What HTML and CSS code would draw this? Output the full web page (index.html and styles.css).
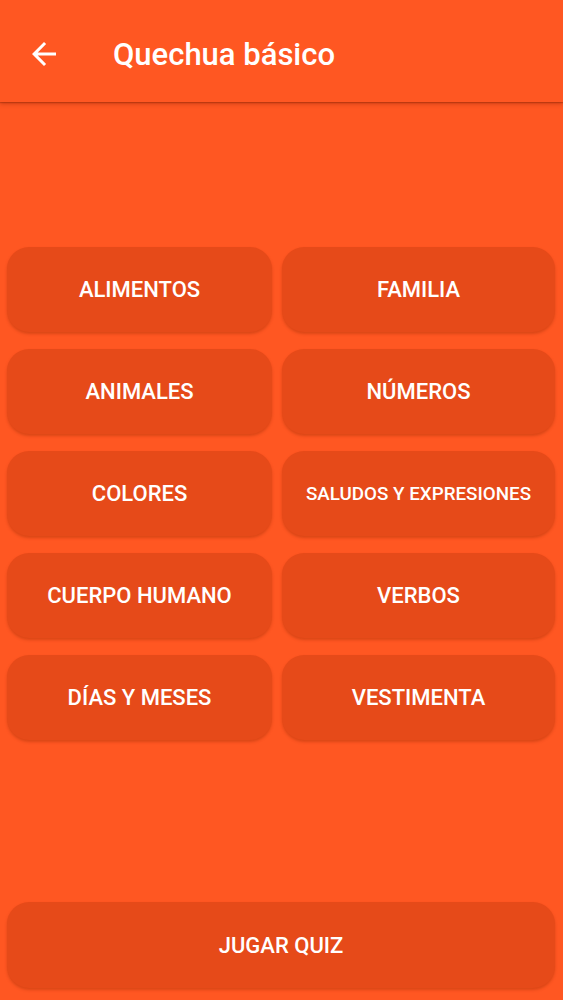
FILE: index.html
```html
<!DOCTYPE html>
<html lang="es">
<head>
<meta charset="utf-8">
<title>Quechua básico</title>
<link rel="stylesheet" href="styles.css">
</head>
<body>
<div class="screen">
  <header class="appbar">
    <button class="back" aria-label="Atrás">
      <svg viewBox="0 0 24 24" width="36" height="36"><path fill="#fff" d="M20 11H7.83l5.59-5.59L12 4l-8 8 8 8 1.41-1.41L7.83 13H20v-2z"/></svg>
    </button>
    <h1 class="title">Quechua básico</h1>
  </header>
  <main class="content">
    <div class="grid">
      <button class="btn">ALIMENTOS</button>
      <button class="btn">FAMILIA</button>
      <button class="btn">ANIMALES</button>
      <button class="btn">NÚMEROS</button>
      <button class="btn">COLORES</button>
      <button class="btn btn-small">SALUDOS Y EXPRESIONES</button>
      <button class="btn">CUERPO HUMANO</button>
      <button class="btn">VERBOS</button>
      <button class="btn">DÍAS Y MESES</button>
      <button class="btn">VESTIMENTA</button>
    </div>
    <button class="btn quiz">JUGAR QUIZ</button>
  </main>
</div>
</body>
</html>
```

FILE: styles.css
```css
html, body {
  margin: 0;
  padding: 0;
  background: #ff5722;
}
.screen {
  width: 563px;
  height: 1000px;
  display: flex;
  flex-direction: column;
  font-family: Roboto, "Noto Sans", sans-serif;
  background: #ff5722;
  overflow: hidden;
}
.appbar {
  box-sizing: border-box;
  height: 102px;
  padding-top: 6px;
  flex: none;
  display: flex;
  align-items: center;
  background: #ff5722;
  box-shadow: 0 2px 4px rgba(120, 30, 0, 0.35), 0 1px 1px rgba(120, 30, 0, 0.3);
  position: relative;
  z-index: 1;
}
.back {
  background: none;
  border: 0;
  padding: 0;
  margin: 0 0 0 26px;
  width: 36px;
  height: 36px;
  display: flex;
}
.title {
  margin: 0 0 0 51px;
  color: #fff;
  font-size: 31px;
  font-weight: 500;
  letter-spacing: 0;
}
.content {
  flex: 1;
  display: flex;
  flex-direction: column;
  padding: 0 8px 12px 7px;
}
.grid {
  margin-top: 145px;
  display: grid;
  grid-template-columns: 265fr 273fr;
  column-gap: 10px;
  row-gap: 17px;
}
.btn {
  height: 85px;
  border: 0;
  border-radius: 22px;
  background: #e64a19;
  color: #fff;
  font-family: Roboto, "Noto Sans", sans-serif;
  font-weight: 500;
  font-size: 22px;
  padding: 0;
  box-shadow: 0 2px 3px rgba(150, 40, 0, 0.35);
}
.btn-small {
  font-size: 18.8px;
}
.quiz {
  margin-top: auto;
  width: 100%;
  height: 86px;
}
```
